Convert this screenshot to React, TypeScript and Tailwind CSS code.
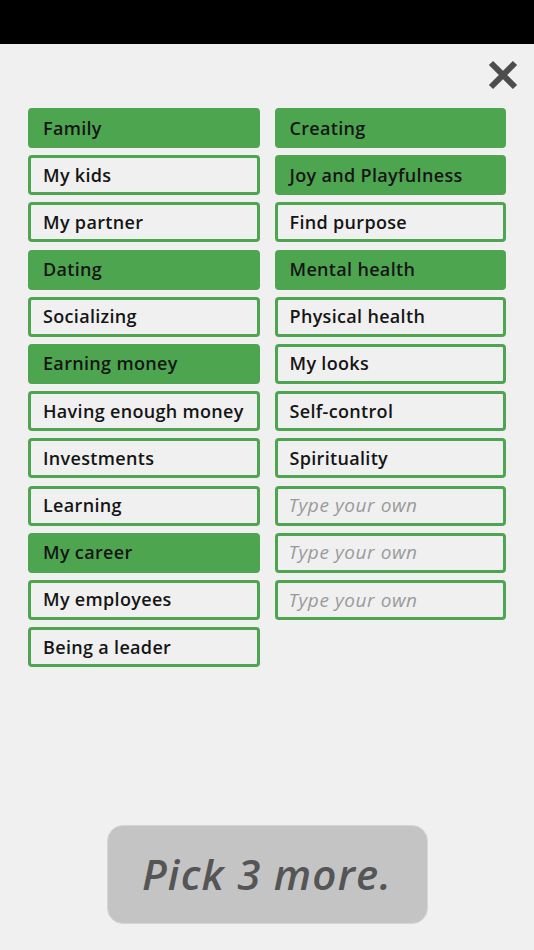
import React from 'react';

type Item = { label: string; selected?: boolean; placeholder?: boolean };

const leftItems: Item[] = [
  { label: 'Family', selected: true },
  { label: 'My kids' },
  { label: 'My partner' },
  { label: 'Dating', selected: true },
  { label: 'Socializing' },
  { label: 'Earning money', selected: true },
  { label: 'Having enough money' },
  { label: 'Investments' },
  { label: 'Learning' },
  { label: 'My career', selected: true },
  { label: 'My employees' },
  { label: 'Being a leader' },
];

const rightItems: Item[] = [
  { label: 'Creating', selected: true },
  { label: 'Joy and Playfulness', selected: true },
  { label: 'Find purpose' },
  { label: 'Mental health', selected: true },
  { label: 'Physical health' },
  { label: 'My looks' },
  { label: 'Self-control' },
  { label: 'Spirituality' },
  { label: 'Type your own', placeholder: true },
  { label: 'Type your own', placeholder: true },
  { label: 'Type your own', placeholder: true },
];

const Tile: React.FC<{ item: Item }> = ({ item }) => {
  if (item.placeholder) {
    return (
      <div className="flex h-[40px] items-center rounded-[4px] border-[3px] border-[#4ea550] bg-[#f0f0f0] px-[11px]">
        <span className="whitespace-nowrap text-[19px] italic tracking-[0.03em] text-[#9a9a9a]">{item.label}</span>
      </div>
    );
  }
  return (
    <div
      className={
        item.selected
          ? 'flex h-[40px] items-center rounded-[4px] border-[3px] border-[#4ea550] bg-[#4ea550] px-[12px]'
          : 'flex h-[40px] items-center rounded-[4px] border-[3px] border-[#4ea550] bg-[#f0f0f0] px-[12px]'
      }
    >
      <span className="whitespace-nowrap text-[18px] font-semibold tracking-[0.018em] text-[#151515]">{item.label}</span>
    </div>
  );
};

export default function App() {
  return (
    <div
      className="flex h-[950px] w-[534px] flex-col bg-[#f0f0f0]"
      style={{ fontFamily: '"Open Sans", "Liberation Sans", sans-serif' }}
    >
      <div className="h-[44px] bg-black" />
      <div className="flex justify-end pr-[16px] pt-[16px]">
        <svg width="30" height="30" viewBox="0 0 30 30">
          <path d="M3 3 L27 27 M27 3 L3 27" stroke="#4d4d4d" strokeWidth="6" />
        </svg>
      </div>
      <div className="mt-[18px] grid grid-cols-2 gap-x-[15px] px-[28px]">
        <div className="flex flex-col gap-[7.2px]">
          {leftItems.map((item, i) => (
            <Tile key={i} item={item} />
          ))}
        </div>
        <div className="flex flex-col gap-[7.2px]">
          {rightItems.map((item, i) => (
            <Tile key={i} item={item} />
          ))}
        </div>
      </div>
      <div className="mt-auto mb-[26px] flex justify-center">
        <button className="flex h-[99px] w-[321px] items-center justify-center rounded-[16px] border border-[#d6d6d6] bg-[#c4c4c4] pb-[2px]">
          <span className="whitespace-nowrap text-[42px] font-semibold italic tracking-[0.03em] text-[#555]">Pick 3 more.</span>
        </button>
      </div>
    </div>
  );
}
